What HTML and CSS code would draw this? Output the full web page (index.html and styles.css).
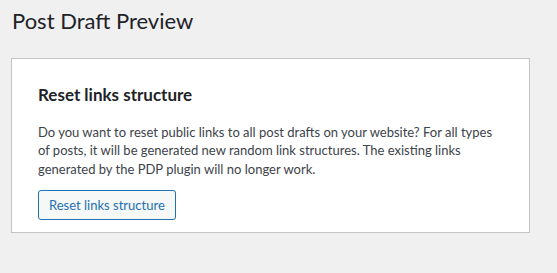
FILE: index.html
```html
<!DOCTYPE html>
<html>
<head>
<meta charset="utf-8">
<link rel="stylesheet" href="styles.css">
</head>
<body>
<div class="wrap">
  <h1 class="page-title">Post Draft Preview</h1>
  <div class="card">
    <h2 class="card-title">Reset links structure</h2>
    <p class="card-text">Do you want to reset public links to all post drafts on your website? For all types of posts, it will be generated new random link structures. The existing links generated by the PDP plugin will no longer work.</p>
    <button class="btn" type="button">Reset links structure</button>
  </div>
</div>
</body>
</html>
```

FILE: styles.css
```css
html, body {
  margin: 0;
  padding: 0;
  background: #f0f0f1;
  font-family: "Segoe UI", Lato, sans-serif;
  color: #1d2327;
}
.wrap {
  padding: 0 27px 0 11px;
}
.page-title {
  margin: 0;
  padding: 6px 0 0 1px;
  font-size: 22px;
  font-weight: 400;
  line-height: 29px;
  height: 58px;
  box-sizing: border-box;
}
.card {
  background: #fff;
  border: 1px solid #c3c4c7;
  padding: 24px 26px 12px 26px;
  box-shadow: 0 1px 1px rgba(0,0,0,.04);
}
.card-title {
  margin: 0 0 16px 0;
  font-size: 17px;
  font-weight: 700;
  line-height: 24px;
}
.card-text {
  margin: 0 0 12px 0;
  font-size: 13px;
  line-height: 18.4px;
  color: #3c434a;
}
.btn {
  display: block;
  font-family: inherit;
  font-size: 13px;
  color: #2271b1;
  background: #f6f7f7;
  border: 1px solid #2271b1;
  border-radius: 3px;
  height: 30px;
  padding: 0 10px;
  cursor: pointer;
}
```
